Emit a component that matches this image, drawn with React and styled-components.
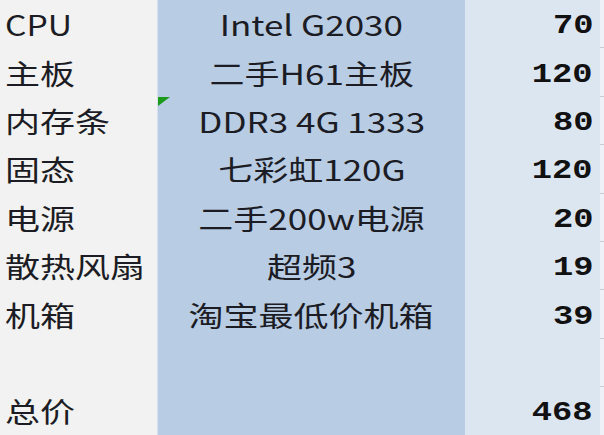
import React from "react";
import styled, { createGlobalStyle } from "styled-components";

const Global = createGlobalStyle`
  html, body { margin: 0; padding: 0; background: #f2f2f2; }
  body { overflow: hidden; }
`;

const Sheet = styled.div`
  display: flex;
  flex-direction: column;
  width: 604px;
  height: 435px;
  overflow: hidden;
`;

const Row = styled.div`
  display: grid;
  grid-template-columns: 157px 308px 135px 4px;
  height: 48.4px;
  flex: none;
`;

const Cell = styled.div`
  position: relative;
  display: flex;
  align-items: center;
  overflow: visible;
  white-space: nowrap;
  box-sizing: border-box;
`;

const LabelCell = styled(Cell)`
  background: #f2f2f2;
  padding-left: 5px;
  justify-content: flex-start;
`;

const NameCell = styled(Cell)`
  background: #b8cce4;
  justify-content: center;
  border-left: 1px solid #d6e0ee;
`;

const PriceCell = styled(Cell)`
  background: #dce6f1;
  justify-content: flex-end;
  padding-right: 7px;
  padding-top: 5px;
`;

const EdgeCell = styled.div`
  background: #eef2f8;
  border-bottom: 1px solid #c9ccd2;
  box-sizing: border-box;
`;

const Text = styled.span`
  display: inline-block;
  font-family: "Noto Sans CJK SC", "Noto Sans", sans-serif;
  font-size: 28px;
  line-height: 1;
  color: #1c1c24;
  transform: scaleX(${(p) => p.$sx || 1.25});
  transform-origin: ${(p) => p.$origin || "left"} center;
`;

const Num = styled(Text)`
  font-family: "Liberation Mono", monospace;
  font-weight: bold;
  font-size: 27px;
  color: #111;
`;

const ErrorMark = styled.div`
  position: absolute;
  left: 0;
  top: 0;
  width: 0;
  height: 0;
  border-top: 9px solid #1c9a1c;
  border-right: 12px solid transparent;
`;

const rows = [
  ["CPU", "Intel G2030", "70"],
  ["主板", "二手H61主板", "120"],
  ["内存条", "DDR3 4G 1333", "80", true],
  ["固态", "七彩虹120G", "120"],
  ["电源", "二手200w电源", "20"],
  ["散热风扇", "超频3", "19"],
  ["机箱", "淘宝最低价机箱", "39"],
  ["", "", ""],
  ["总价", "", "468"],
];

export default function App() {
  return (
    <>
      <Global />
      <Sheet>
        {rows.map(([label, name, price, mark], i) => (
          <Row key={i}>
            <LabelCell>
              <Text $origin="left" $sx={label === "CPU" ? 1.2 : 1.25}>{label}</Text>
            </LabelCell>
            <NameCell>
              {mark && <ErrorMark />}
              <Text $origin="center">{name}</Text>
            </NameCell>
            <PriceCell>
              <Num $origin="right">{price}</Num>
            </PriceCell>
            <EdgeCell />
          </Row>
        ))}
      </Sheet>
    </>
  );
}
